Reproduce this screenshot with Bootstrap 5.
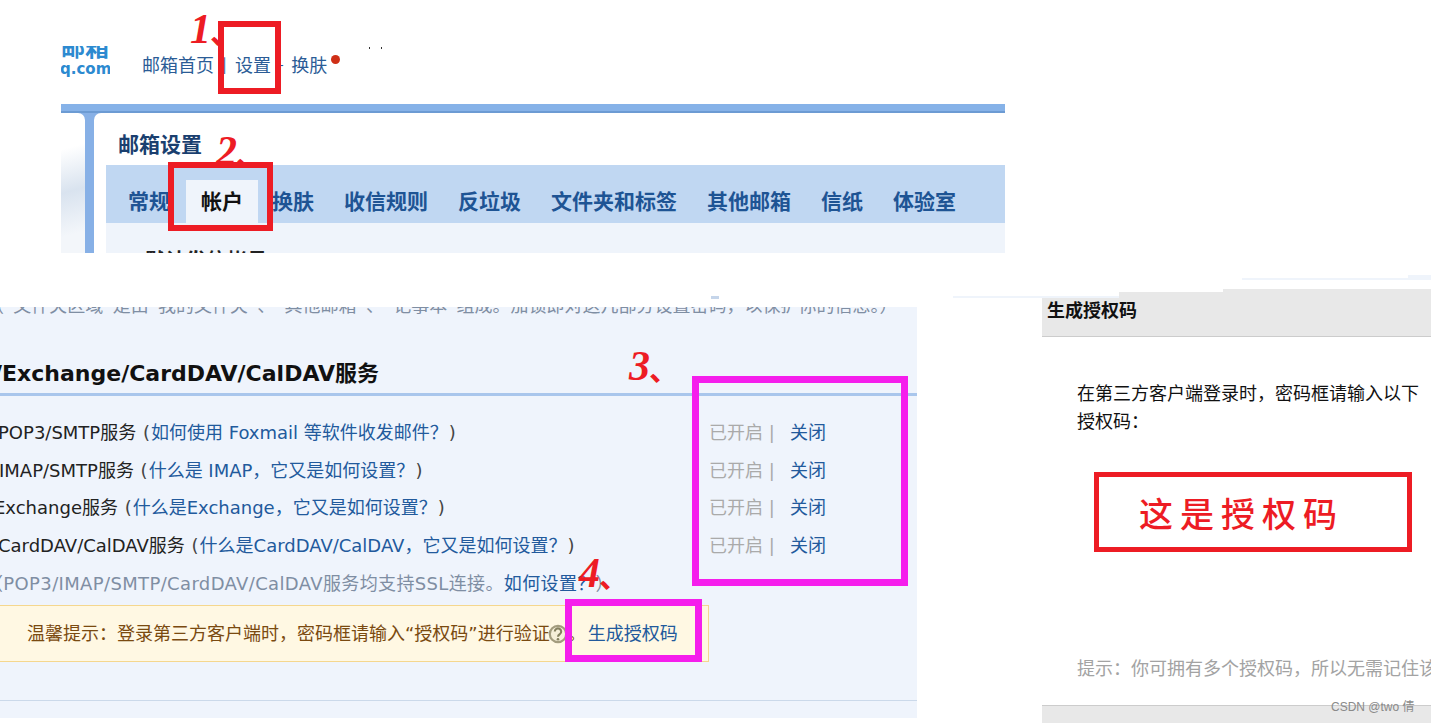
<!DOCTYPE html>
<html lang="zh-CN">
<head>
  <meta charset="UTF-8">
  <title>生成授权码</title>
  <link href="https://cdn.jsdelivr.net/npm/bootstrap@5.3.3/dist/css/bootstrap.min.css" rel="stylesheet">
  <style>
    html, body { height: 723px; overflow: hidden; }
    body { font-family: "DejaVu Sans", "Noto Sans CJK SC", sans-serif; font-size: 18px; background: #fff; position: relative; }
    a { text-decoration: none; color: #225a9c; }

    /* the three pasted screenshots sit on a free canvas */
    .shot { position: absolute; overflow: hidden; }
    .shot-top { left: 61px; top: 0; width: 944px; height: 253px; }
    .shot-mid { left: 0; top: 307px; width: 917px; height: 411px; background: #eff4fc; }
    .shot-right { left: 1042px; top: 289px; width: 389px; height: 434px; }

    /* top shot */
    .top-head { height: 104px; }
    .logo-box { width: 49px; height: 32px; margin-top: 46px; overflow: hidden; color: #2c8ad0; font-weight: 700; }
    .logo-cut { font-size: 24px; line-height: 0; height: 15px; white-space: nowrap; font-family: "Noto Sans CJK SC", sans-serif; }
    .logo-dom { font-size: 15px; line-height: 17px; margin-left: -1px; white-space: nowrap; }
    .top-nav { margin: 52px 0 0 32px; color: #2b5c96; line-height: 24px; font-family: "Noto Sans CJK SC", sans-serif; }
    .top-nav .sep { color: #2b5c96; font-size: 15px; margin: 0 8.5px; }
    .top-nav .sep-two { margin: 0 7.5px; }
    .nav-dot { width: 9px; height: 9px; border-radius: 50%; background: #cf2f16; margin: 3px 0 0 4px; }
    .blue-bar { height: 9px; background: #86b2e8; border-bottom: 2px solid #6c9bd3; }
    .shell { background: #87b0e6; }
    .side-img { width: 24px; margin-right: 9px; border-top-right-radius: 7px; background: linear-gradient(165deg, #fff 25%, #d9e3ef 55%, #f3f6fa 85%); }
    .panel-main { padding-left: 12px; background: #fff; border-top-left-radius: 7px; }
    .panel-title { height: 52px; padding: 14px 0 0 12px; font-size: 21px; line-height: 32px; font-weight: 700; color: #1a3f6f; font-family: "Noto Sans CJK SC", sans-serif; }
    .tab-row { height: 58px; background: #c0d7f2; padding: 15px 0 0 7px; font-family: "Noto Sans CJK SC", sans-serif; }
    .tab-item { height: 43px; padding: 0 15px; font-size: 21px; line-height: 41px; font-weight: 700; color: #1e5494; }
    .tab-item.on { background: #eff4fb; color: #111; margin: 0 -1px 0 1px; }
    .tab-sub { background: #eff4fb; height: 30px; padding: 21px 0 0 39px; font-size: 20.4px; font-weight: 700; line-height: 30px; color: #222; font-family: "Noto Sans CJK SC", sans-serif; }

    /* middle shot */
    .cut-line { margin: -10px 0 0 -14px; height: 19px; line-height: 18px; color: #7f8ea3; white-space: nowrap; }
    .svc-head { margin: 37px 0 0 -6px; height: 43px; line-height: 42px; font-size: 22px; font-weight: 700; color: #111; border-bottom: 3px solid #a9c6ec; white-space: nowrap; }
    .svc-list { margin-top: 18px; }
    .svc-row { height: 37.6px; }
    .svc-name { width: 709px; white-space: nowrap; overflow: hidden; color: #222; }
    .svc-paren { color: #444; margin: 0 1px; }
    .shift-a { margin-left: -2px; }
    .shift-b { margin-left: -1px; }
    .shift-c { margin-left: -6px; }
    .svc-state { color: #aaa; width: 81px; }
    .svc-note { color: #7f8ea3; white-space: nowrap; margin: 0 0 2px -15px; height: 39px; letter-spacing: .36px; }
    .tip-box { width: 710px; height: 57px; margin-left: -1px; padding-left: 27px; background: #fff8e3; border: 1px solid #f5d78e; color: #7a4a10; white-space: nowrap; }
    .tip-box a { margin-left: 2px; }
    .tip-ico { margin-left: -2px; }
    .mid-rule { margin-top: 38px; border-top: 1px solid #cbd9ea; }

    /* right shot */
    .gen-head { height: 48px; background: #e8e8e8; border-bottom: 1px solid #ccc; padding-left: 5px; font-weight: 700; color: #111; line-height: 40px; font-family: "Noto Sans CJK SC", sans-serif; }
    .gen-body { padding: 41px 0 0 35px; height: 368px; font-family: "Noto Sans CJK SC", sans-serif; }
    .gen-text { width: 350px; line-height: 28px; color: #111; }
    .gen-code { width: 318px; height: 80px; margin: 38px 0 0 17px; border: 5px solid #ed1c24; padding-left: 40px; color: #ed1c24; font-size: 34px; font-weight: 500; letter-spacing: 7px; line-height: 72px; }
    .gen-hint { margin-top: 102px; color: #a3a3a3; white-space: nowrap; }
    .gen-foot { height: 18px; background: #e8e8e8; border-top: 1px solid #ccc; }

    /* annotations over the shots */
    .mark-box { position: absolute; }
    .mark-red { border: 6px solid #ed1c24; }
    .mark-pink { border: 7px solid #f51eec; }
    .mark-num { position: absolute; color: #ed1c24; font-family: "Liberation Serif", serif; font-style: italic; font-weight: 700; font-size: 42px; line-height: 42px; white-space: nowrap; }
    .mark-num span { font-family: "Noto Sans CJK SC", sans-serif; font-style: normal; font-size: 30px; margin-left: -1px; }
    .scrap { position: absolute; }
    .watermark { position: absolute; left: 1331px; top: 699px; color: #8a8a8a; font-size: 12px; line-height: 16px; font-family: "Liberation Sans", "Noto Sans CJK SC", sans-serif; }
  </style>
</head>
<body>

  <!-- top screenshot: mailbox header and settings tabs -->
  <div class="shot shot-top">
    <div class="top-head d-flex">
      <div class="logo-box">
        <div class="logo-cut">邮箱</div>
        <div class="logo-dom">q.com</div>
      </div>
      <div class="top-nav d-flex align-items-start">
        <span>邮箱首页</span><span class="sep">|</span><span>设置</span><span class="sep sep-two">-</span><span>换肤</span><span class="nav-dot"></span>
      </div>
    </div>
    <div class="blue-bar"></div>
    <div class="shell d-flex">
      <div class="side-img"></div>
      <div class="panel-main flex-grow-1">
        <div class="panel-title">邮箱设置</div>
        <div class="tab-row d-flex">
          <span class="tab-item">常规</span>
          <span class="tab-item on">帐户</span>
          <span class="tab-item">换肤</span>
          <span class="tab-item">收信规则</span>
          <span class="tab-item">反垃圾</span>
          <span class="tab-item">文件夹和标签</span>
          <span class="tab-item">其他邮箱</span>
          <span class="tab-item">信纸</span>
          <span class="tab-item">体验室</span>
        </div>
        <div class="tab-sub">默认发信帐号</div>
      </div>
    </div>
  </div>

  <!-- middle screenshot: POP3/IMAP services -->
  <div class="shot shot-mid">
    <div class="cut-line">（“文件夹区域”是由“我的文件夹”、“其他邮箱”、“记事本”组成。加锁即对这几部分设置密码，以保护你的信息。）</div>
    <div class="svc-head">/Exchange/CardDAV/CalDAV服务</div>
    <div class="svc-list">
      <div class="svc-row d-flex align-items-center">
        <div class="svc-name"><span class="d-inline-block shift-a">POP3/SMTP服务 <span class="svc-paren">(</span><a href="#">如何使用 Foxmail 等软件收发邮件？</a><span class="svc-paren">)</span></span></div>
        <div class="svc-state">已开启 |</div><a href="#">关闭</a>
      </div>
      <div class="svc-row d-flex align-items-center">
        <div class="svc-name"><span class="d-inline-block shift-b">IMAP/SMTP服务 <span class="svc-paren">(</span><a href="#">什么是 IMAP，它又是如何设置？</a><span class="svc-paren">)</span></span></div>
        <div class="svc-state">已开启 |</div><a href="#">关闭</a>
      </div>
      <div class="svc-row d-flex align-items-center">
        <div class="svc-name"><span class="d-inline-block shift-c">Exchange服务 <span class="svc-paren">(</span><a href="#">什么是Exchange，它又是如何设置？</a><span class="svc-paren">)</span></span></div>
        <div class="svc-state">已开启 |</div><a href="#">关闭</a>
      </div>
      <div class="svc-row d-flex align-items-center">
        <div class="svc-name"><span class="d-inline-block shift-a">CardDAV/CalDAV服务 <span class="svc-paren">(</span><a href="#">什么是CardDAV/CalDAV，它又是如何设置？</a><span class="svc-paren">)</span></span></div>
        <div class="svc-state">已开启 |</div><a href="#">关闭</a>
      </div>
    </div>
    <div class="svc-note d-flex align-items-center">（POP3/IMAP/SMTP/CardDAV/CalDAV服务均支持SSL连接。<a href="#">如何设置？</a>）</div>
    <div class="tip-box d-flex align-items-center">
      温馨提示：登录第三方客户端时，密码框请输入“授权码”进行验证
      <svg width="20" height="20" viewBox="0 0 20 20" class="tip-ico flex-shrink-0"><circle cx="10" cy="10" r="8.2" fill="#f6efd8" stroke="#a39c7e" stroke-width="2.2"/><path d="M6.8 7.6a3.2 3.2 0 1 1 5 2.6c-1.2.8-1.8 1.2-1.8 2.6" fill="none" stroke="#85805f" stroke-width="2.1"/><circle cx="10" cy="15.2" r="1.3" fill="#85805f"/></svg>
      。<a href="#">生成授权码</a>
    </div>
    <div class="mid-rule"></div>
  </div>

  <!-- right screenshot: authorisation code dialog -->
  <div class="shot shot-right">
    <div class="gen-head">生成授权码</div>
    <div class="gen-body">
      <div class="gen-text">在第三方客户端登录时，密码框请输入以下授权码：</div>
      <div class="gen-code">这是授权码</div>
      <div class="gen-hint">提示：你可拥有多个授权码，所以无需记住该授权码。</div>
    </div>
    <div class="gen-foot"></div>
  </div>

  <!-- leftovers of the pasted pictures -->
  <svg class="scrap" style="left:368px;top:46px" width="16" height="4"><rect x="1" y="1" width="1" height="2" fill="#333"/><rect x="13" y="1" width="1" height="2" fill="#333"/></svg>
  <svg class="scrap" style="left:711px;top:296px" width="8" height="3"><rect width="8" height="3" fill="#c5d5ea"/></svg>
  <svg class="scrap" style="left:953px;top:289px" width="270" height="10"><rect x="89" width="77" height="7" fill="#fff"/><rect x="166" width="104" height="3" fill="#fff"/><rect y="7" width="166" height="2" fill="#eff4fb"/></svg>
  <svg class="scrap" style="left:1242px;top:275px" width="189" height="5"><rect y="3" width="166" height="2" fill="#eff4fb"/><rect x="166" width="23" height="5" fill="#eff4fb"/></svg>

  <!-- red and pink marks drawn on top -->
  <div class="mark-box mark-red" style="left:218px;top:21px;width:63px;height:73px"></div>
  <div class="mark-box mark-red" style="left:168px;top:162px;width:105px;height:69px"></div>
  <div class="mark-box mark-pink" style="left:692px;top:376px;width:216px;height:210px"></div>
  <div class="mark-box mark-pink" style="left:565px;top:599px;width:137px;height:63px"></div>
  <div class="mark-num" style="left:190px;top:8px">1<span>、</span></div>
  <div class="mark-num" style="left:216px;top:130px">2<span>、</span></div>
  <div class="mark-num" style="left:629px;top:345px">3<span>、</span></div>
  <div class="mark-num" style="left:579px;top:552px">4<span>、</span></div>

  <div class="watermark">CSDN @two 倩</div>

  <script src="https://cdn.jsdelivr.net/npm/bootstrap@5.3.3/dist/js/bootstrap.bundle.min.js"></script>
</body>
</html>
